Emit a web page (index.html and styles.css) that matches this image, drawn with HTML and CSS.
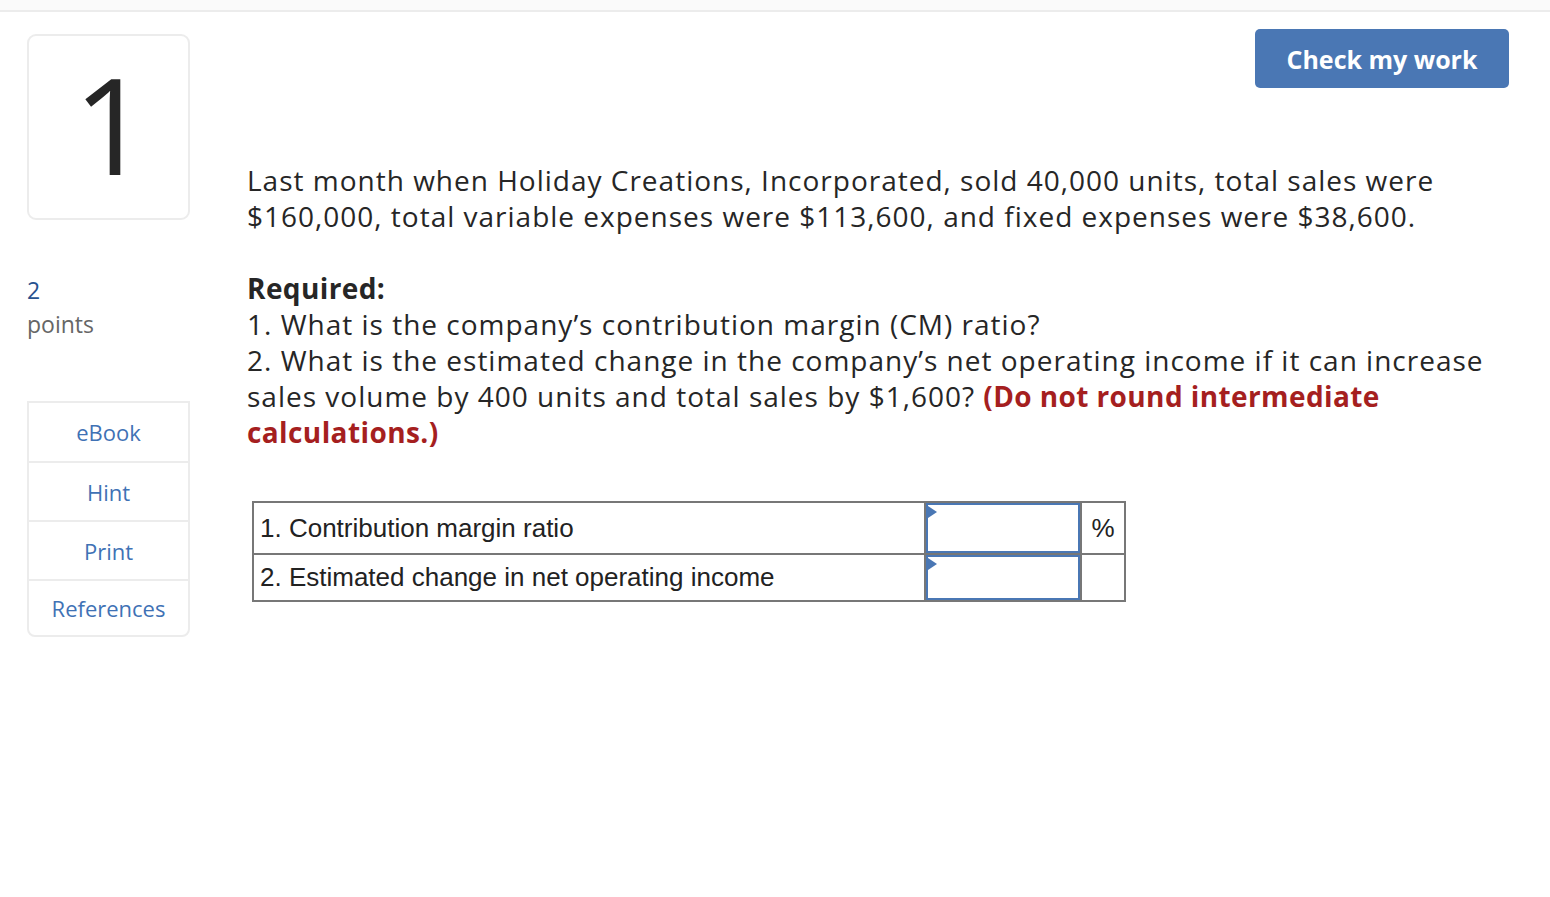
FILE: index.html
```html
<!DOCTYPE html>
<html lang="en">
<head>
<meta charset="utf-8">
<title>Question 1</title>
<link rel="stylesheet" href="styles.css">
</head>
<body>
<div class="topbar"></div>
<div class="main">
  <aside class="side">
    <div class="qnum">1</div>
    <div class="points">
      <div class="pts-val">2</div>
      <div class="pts-label">points</div>
    </div>
    <ul class="tools">
      <li>eBook</li>
      <li>Hint</li>
      <li>Print</li>
      <li>References</li>
    </ul>
  </aside>
  <section class="content">
    <div class="head">
      <button class="check">Check my work</button>
    </div>
    <p class="stem">Last month when Holiday Creations, Incorporated, sold 40,000 units, total sales were<br>$160,000, total variable expenses were $113,600, and fixed expenses were $38,600.</p>
    <p class="req"><strong>Required:</strong><br>1. What is the company’s contribution margin (CM) ratio?<br>2. What is the estimated change in the company’s net operating income if it can increase<br>sales volume by 400 units and total sales by $1,600? <strong class="warn">(Do not round intermediate<br>calculations.)</strong></p>
    <table class="answers">
      <tr class="r1">
        <td class="lbl">1. Contribution margin ratio</td>
        <td class="inp"><div class="box"></div></td>
        <td class="unit">%</td>
      </tr>
      <tr class="r2">
        <td class="lbl">2. Estimated change in net operating income</td>
        <td class="inp"><div class="box"></div></td>
        <td class="unit"></td>
      </tr>
    </table>
  </section>
</div>
</body>
</html>
```

FILE: styles.css
```css
* { box-sizing: border-box; }
body {
  margin: 0;
  background: #fff;
  font-family: "Open Sans", Lato, Arial, sans-serif;
  color: #222;
}
.topbar {
  height: 12px;
  background: #fafafa;
  border-bottom: 2px solid #ececec;
}
.main {
  display: flex;
  padding: 17px 41px 0 27px;
}
.side {
  width: 163px;
  flex: none;
  margin-top: 5px;
}
.qnum {
  height: 186px;
  border: 2px solid #ececec;
  border-radius: 9px;
  display: flex;
  align-items: center;
  justify-content: center;
  font-size: 134px;
  line-height: 1;
  color: #262626;
  padding-bottom: 8px;
  padding-left: 6px;
}
.points {
  margin-top: 53px;
  font-size: 23px;
  line-height: 34px;
}
.pts-val { color: #27528f; }
.pts-label { color: #666; }
.tools {
  list-style: none;
  margin: 60px 0 0;
  padding: 0;
  border: 2px solid #ececec;
  border-radius: 0 0 8px 8px;
}
.tools li {
  height: 59px;
  display: flex;
  align-items: center;
  justify-content: center;
  color: #3f72b5;
  font-size: 22px;
  border-top: 2px solid #ececec;
}
.tools li:first-child { border-top: 0; height: 58px; }
.tools li:last-child { height: 56px; }
.content {
  flex: 1;
  margin-left: 57px;
}
.head {
  display: flex;
  justify-content: flex-end;
}
.check {
  width: 254px;
  height: 59px;
  border: 0;
  border-radius: 5px;
  background: #4a77b4;
  color: #fff;
  font-family: inherit;
  font-size: 25px;
  font-weight: 700;
}
.stem, .req {
  margin: 0;
  font-size: 28px;
  line-height: 36px;
  letter-spacing: 1px;
  color: #262626;
}
.stem { margin-top: 74px; }
.req { margin-top: 36px; }
.req strong { font-weight: 700; letter-spacing: 0.4px; }
.req .warn { color: #a51f1f; }
.answers {
  margin: 51px 0 0 5px;
  border-collapse: collapse;
  font-family: "Liberation Sans", Arial, sans-serif;
  font-size: 26px;
  color: #222;
}
.answers td {
  border: 2px solid #777;
  padding: 0;
}
.answers .r1 td { height: 52px; }
.answers .r2 td { height: 47px; }
.lbl { width: 672px; padding-left: 6px !important; }
.inp { width: 156px; position: relative; }
.unit { width: 44px; text-align: center; }
.box {
  position: absolute;
  inset: 0;
  border: 2px solid #4a77b4;
}
.box::before {
  content: "";
  position: absolute;
  left: 0;
  top: 1px;
  border-left: 9px solid #4a77b4;
  border-top: 6px solid transparent;
  border-bottom: 6px solid transparent;
}
```
